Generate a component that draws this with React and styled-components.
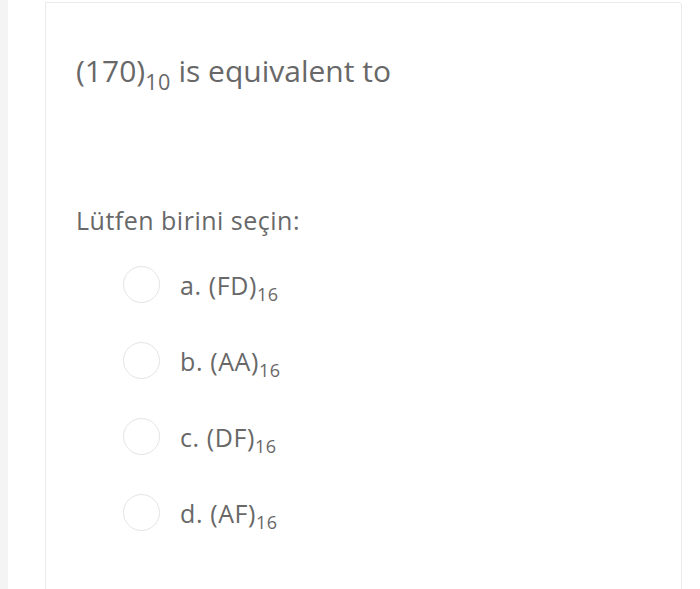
import styled, { createGlobalStyle } from 'styled-components';

const GlobalStyle = createGlobalStyle`
    html, body {
        margin: 0;
        padding: 0;
        background: #ffffff;
        font-family: "Open Sans", "Noto Sans", sans-serif;
    }
`;

const Page = styled.div`
    display: flex;
    width: 700px;
    height: 589px;
    overflow: hidden;
    background: #ffffff;
`;

const SideStrip = styled.div`
    width: 8px;
    flex-shrink: 0;
    background: #f4f4f4;
`;

const Main = styled.div`
    flex: 1;
    padding: 2px 18px 0 37px;
`;

const Card = styled.div`
    height: 640px;
    border: 1px solid #ebebeb;
    border-bottom: none;
    border-radius: 0 4px 0 0;
    padding: 0 30px;
    color: #686868;
`;

const Question = styled.div`
    margin-top: 47px;
    font-size: 30px;
    line-height: 42px;
`;

const Prompt = styled.div`
    margin-top: 111px;
    font-size: 25px;
    letter-spacing: 0.5px;
    line-height: 34px;
`;

const Options = styled.div`
    display: flex;
    flex-direction: column;
    gap: 39px;
    margin-top: 29px;
    padding-left: 47px;
`;

const Option = styled.label`
    display: flex;
    align-items: center;
    gap: 20px;
    height: 37px;
    font-size: 25px;
    letter-spacing: 0.6px;
    cursor: pointer;
`;

const Radio = styled.span`
    box-sizing: border-box;
    width: 37px;
    height: 37px;
    border: 1.5px solid #e4e4e4;
    border-radius: 50%;
    flex-shrink: 0;
`;

const Sub = styled.sub`
    font-size: 0.72em;
    letter-spacing: 0.4px;
    vertical-align: -0.35em;
    line-height: 0;
`;

const options = [
    { key: 'a', value: 'FD' },
    { key: 'b', value: 'AA' },
    { key: 'c', value: 'DF' },
    { key: 'd', value: 'AF' },
];

function App() {
    return (
        <Page>
            <GlobalStyle />
            <SideStrip />
            <Main>
                <Card>
                    <Question>
                        (170)<Sub>10</Sub> is equivalent to
                    </Question>
                    <Prompt>Lütfen birini seçin:</Prompt>
                    <Options>
                        {options.map(o => (
                            <Option key={o.key}>
                                <Radio />
                                <span>
                                    {o.key}. ({o.value})<Sub>16</Sub>
                                </span>
                            </Option>
                        ))}
                    </Options>
                </Card>
            </Main>
        </Page>
    );
}

export default App;
